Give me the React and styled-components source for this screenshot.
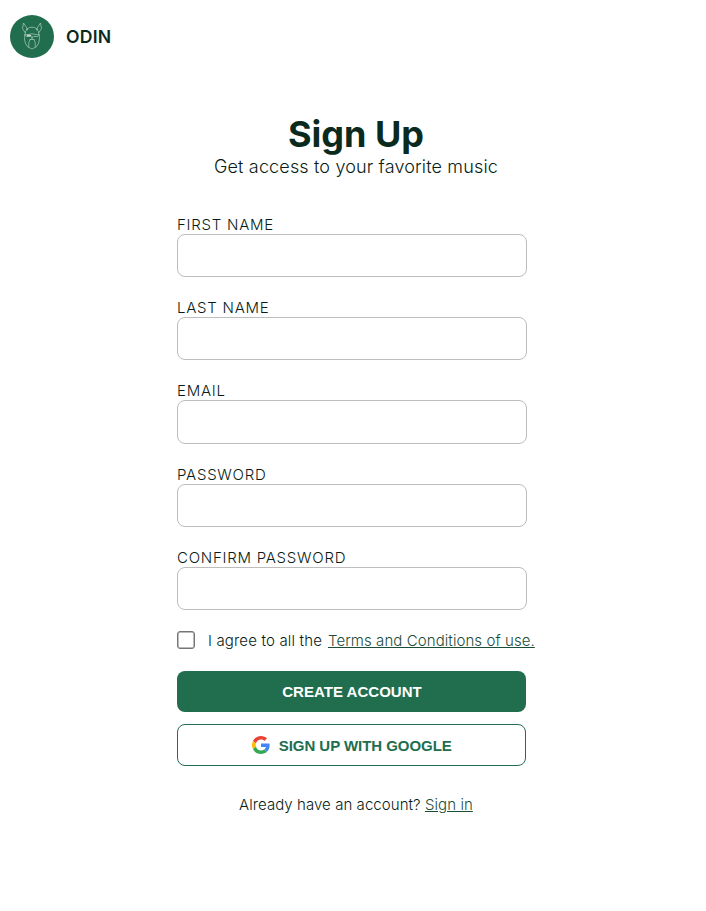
import React from "react";
import styled, { createGlobalStyle } from "styled-components";

const GlobalStyle = createGlobalStyle`
  *, *::before, *::after { box-sizing: border-box; }
  body {
    margin: 0;
    background: #fff;
    color: #081c15;
    font-family: Inter, sans-serif;
    font-weight: 300;
  }
`;

const Page = styled.div`
  min-height: 911px;
`;

const Header = styled.header`
  display: flex;
  align-items: center;
  gap: 12px;
  padding: 15px 10px 0;
  height: 58px;
`;

const BrandName = styled.span`
  color: #0b2a1e;
  font-size: 17.6px;
  font-weight: 600;
  line-height: 22px;
  letter-spacing: 0.2px;
`;

const Intro = styled.section`
  margin-top: 54px;
  padding-left: 6px;
  text-align: center;
`;

const Title = styled.h1`
  margin: 0;
  color: #0b2a1e;
  font-size: 36px;
  font-weight: 700;
  line-height: 44px;
`;

const Subtitle = styled.p`
  margin: 0;
  font-size: 18px;
  line-height: 22px;
  letter-spacing: 0.15px;
`;

const Form = styled.form`
  display: flex;
  flex-direction: column;
  width: 350px;
  margin: 37.75px 0 0 177px;
`;

const Fields = styled.div`
  display: flex;
  flex-direction: column;
  gap: 22px;
`;

const Field = styled.label`
  display: flex;
  flex-direction: column;
  font-size: 15px;
  line-height: 18px;
  letter-spacing: 0.75px;
`;

const Input = styled.input`
  width: 350px;
  height: 43.3px;
  padding: 0 12px;
  border: 1px solid #bdbdbd;
  border-radius: 8px;
  background: #fff;
  font: inherit;
  outline: none;
`;

const Agreement = styled.div`
  display: flex;
  align-items: center;
  height: 20px;
  margin-top: 20.1px;
  font-size: 15px;
  letter-spacing: 0.16px;
  white-space: nowrap;
`;

const Checkbox = styled.input`
  appearance: none;
  flex: none;
  width: 18px;
  height: 18px;
  margin: 0 13px 0 0;
  border: 1px solid #767676;
  box-shadow: inset 0 0 0 0.5px #767676;
  border-radius: 3px;
`;

const Link = styled.a`
  color: #1b4d38;
  text-decoration: underline;
  letter-spacing: 0.08px;
  margin-left: ${({ $gap }) => $gap || 0}px;
`;

const Button = styled.button`
  display: flex;
  align-items: center;
  justify-content: center;
  gap: ${({ $outline }) => ($outline ? 8.5 : 0)}px;
  width: 349px;
  height: ${({ $outline }) => ($outline ? 42 : 41)}px;
  margin: ${({ $outline }) => ($outline ? 12 : 21)}px 0 0;
  padding: 0 0 0 1px;
  border: ${({ $outline }) => ($outline ? "1px solid #216e4e" : "0")};
  border-radius: 8px;
  background: ${({ $outline }) => ($outline ? "#fff" : "#216e4e")};
  color: ${({ $outline }) => ($outline ? "#216e4e" : "#fff")};
  font: 600 15px "Liberation Sans", Arial, sans-serif;
  letter-spacing: ${({ $outline }) => ($outline ? "-0.05px" : "0.03px")};
`;

const SignIn = styled.p`
  margin: 28.8px 0 0;
  padding-left: 6px;
  font-size: 15px;
  line-height: 20px;
  letter-spacing: 0.06px;
  text-align: center;
`;

const Logo = () => (
  <svg width="44" height="43" viewBox="0 0 44 43" aria-label="Odin">
    <ellipse cx="22" cy="21.5" rx="22" ry="21.5" fill="#216e4e" />
    <g fill="none" stroke="#e5f0ea" strokeWidth=".6" strokeLinejoin="round" strokeLinecap="round" opacity=".85">
      <path d="M15 17.500 12.500 13.500 13.500 8l3 4.500.8 2.500M29 17.500l2.500-4L30.500 8l-3 4.500-.8 2.500" />
      <path d="M17 14q5-4 10 0M15 20q0-4 2-6M29 20q0-4-2-6" />
      <path d="M15 19.500l-.5 4 .8 4.500 2 3.500 1.700 1L22 34l3-1.500 1.700-1 2-3.500.8-4.500-.5-4" />
      <path d="M15 20q7-2.500 14 0M16.500 21.500h4l1.500.8 1.500-.8h4M22 22v2.500M20 24.500l-1.200 3v4.500M24 24.500l1.200 3v4.500M20 24.500q2-1 4 0" />
      <path d="M17.500 20.500h3" strokeWidth="1.400" />
    </g>
  </svg>
);

const GoogleIcon = () => (
  <svg width="18" height="18" viewBox="0 0 48 48" aria-hidden="true">
    <path fill="#EA4335" d="M24 9.500c3.540 0 6.710 1.220 9.210 3.600l6.850-6.850C35.900 2.380 30.470 0 24 0 14.620 0 6.510 5.380 2.560 13.220l7.980 6.190C12.430 13.720 17.740 9.500 24 9.500z" />
    <path fill="#4285F4" d="M46.980 24.550c0-1.570-.15-3.090-.38-4.550H24v9.020h12.940c-.58 2.960-2.260 5.480-4.780 7.180l7.730 6c4.510-4.180 7.090-10.360 7.090-17.650z" />
    <path fill="#FBBC05" d="M10.530 28.590A14.500 14.500 0 0 1 9.770 24c0-1.600.27-3.140.76-4.590l-7.980-6.190A23.930 23.930 0 0 0 0 24c0 3.880.92 7.540 2.560 10.780l7.970-6.190z" />
    <path fill="#34A853" d="M24 48c6.480 0 11.930-2.130 15.890-5.810l-7.730-6c-2.150 1.450-4.920 2.300-8.160 2.300-6.260 0-11.570-4.220-13.470-9.910l-7.980 6.190C6.510 42.620 14.620 48 24 48z" />
  </svg>
);

const fields = [
  ["First name", "text"],
  ["Last name", "text"],
  ["Email", "email"],
  ["Password", "password"],
  ["Confirm password", "password"],
];

export default function App() {
  return (
    <Page>
      <GlobalStyle />
      <Header>
        <Logo />
        <BrandName>ODIN</BrandName>
      </Header>
      <Intro>
        <Title>Sign Up</Title>
        <Subtitle>Get access to your favorite music</Subtitle>
      </Intro>
      <Form onSubmit={(e) => e.preventDefault()}>
        <Fields>
          {fields.map(([label, type]) => (
            <Field key={label}>
              {label.toUpperCase()}
              <Input type={type} />
            </Field>
          ))}
        </Fields>
        <Agreement>
          <Checkbox type="checkbox" id="terms" />
          <label htmlFor="terms">I agree to all the</label>
          <Link href="#terms" $gap={6}>Terms and Conditions of use.</Link>
        </Agreement>
        <Button type="submit">CREATE ACCOUNT</Button>
        <Button type="button" $outline>
          <GoogleIcon />
          SIGN UP WITH GOOGLE
        </Button>
      </Form>
      <SignIn>
        Already have an account? <Link href="#signin">Sign in</Link>
      </SignIn>
    </Page>
  );
}
